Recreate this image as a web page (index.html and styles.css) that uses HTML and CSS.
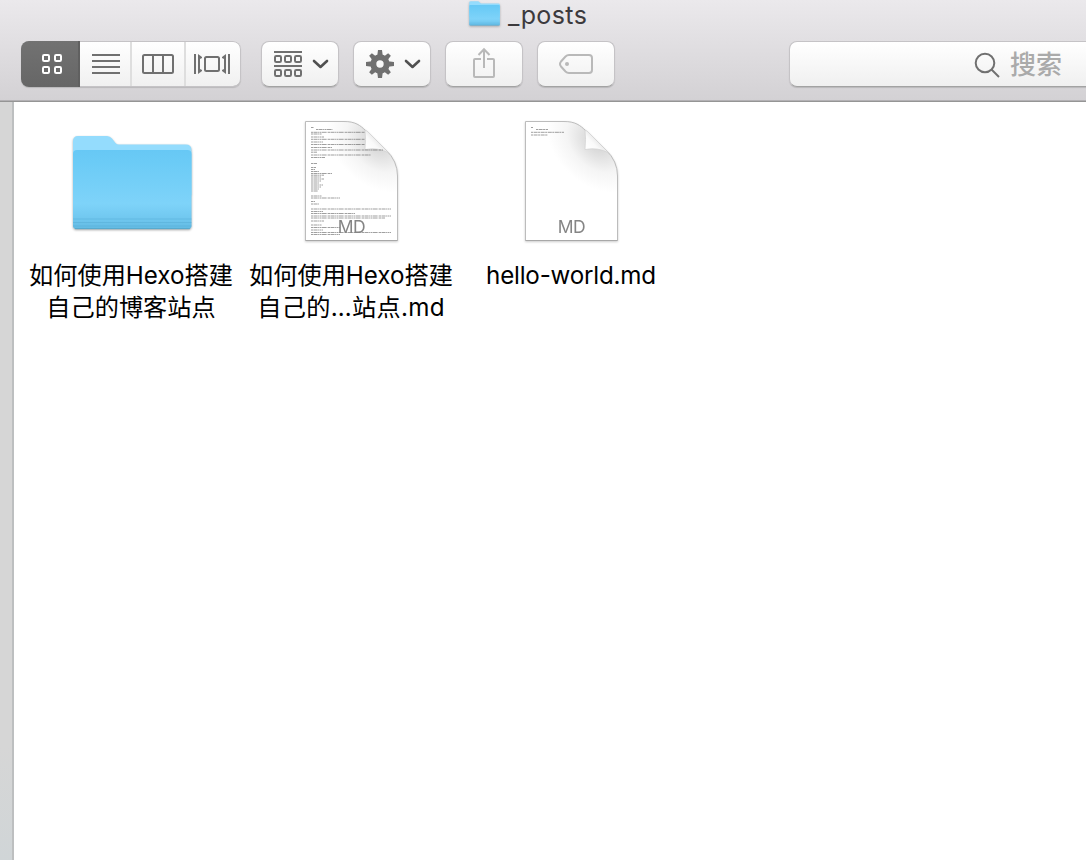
FILE: index.html
```html
<!DOCTYPE html>
<html lang="zh-CN">
<head>
<meta charset="utf-8">
<title>_posts</title>
<link rel="stylesheet" href="styles.css">
</head>
<body>
<svg width="0" height="0" class="defs" aria-hidden="true">
  <defs>
    <linearGradient id="folderFront" x1="0" y1="0" x2="0" y2="1">
      <stop offset="0" stop-color="#67c8f5"/><stop offset=".15" stop-color="#6bcbf6"/><stop offset=".68" stop-color="#7ed3f9"/><stop offset=".87" stop-color="#70c7ef"/><stop offset="1" stop-color="#62bae2"/>
    </linearGradient>
    <linearGradient id="curl" x1="70" y1="39" x2="83" y2="27" gradientUnits="userSpaceOnUse">
      <stop offset="0" stop-color="#fff"/><stop offset=".55" stop-color="#fafafa"/><stop offset="1" stop-color="#e2e2e2"/>
    </linearGradient>
    <radialGradient id="shade" cx="0" cy="0" r="1" gradientUnits="userSpaceOnUse" gradientTransform="translate(82 32) rotate(45) scale(58 42)">
      <stop offset="0" stop-color="#d0d0d0"/><stop offset=".3" stop-color="#e2e2e2"/><stop offset=".6" stop-color="#f5f5f5"/><stop offset="1" stop-color="#fff"/>
    </radialGradient>
    <symbol id="folder" viewBox="0 0 120 96">
      <path d="M1 6.500Q1 1 6 1H35Q38 1 40 3.500L43.500 8Q45 9.500 47 9.500H114Q119.500 9.500 119.500 15V60H1Z" fill="#94dcfd"/>
      <path d="M1 19Q1 15 5 15H115.500Q119.500 15 119.500 19V90.500Q119.500 94 116 94H4.500Q1 94 1 90.500Z" fill="url(#folderFront)"/>
      <path d="M1 84H119.500M1 87.500H119.500M1 91H119.500" stroke="#56add6" stroke-width="1" opacity=".5"/>
      <path d="M3 93.700H118" stroke="#529fc2" stroke-width=".8"/>
    </symbol>
    <symbol id="page" viewBox="0 0 116 140">
      <path d="M10.500 11.500H49C60 11.500 65 15 71 21L91 40Q102.500 51 102.500 66V130.500H10.500Z" fill="url(#shade)" stroke="#bcbcbc"/>
      <path d="M70 20Q71 29 70 39.500Q83 37 94 43L72 21Z" fill="url(#curl)" stroke="#d0d0d0" stroke-width=".7"/>
      <path d="M10.500 130.500H102.500" stroke="#a8a8a8"/>
    </symbol>
  </defs>
</svg>
<header class="toolbar">
  <div class="title">
    <svg class="title-folder" viewBox="0 0 120 96" preserveAspectRatio="none"><use href="#folder"/></svg>
    <span>_posts</span>
  </div>
  <div class="controls">
    <div class="segments">
      <div class="seg seg-icons active">
        <svg width="22" height="22" viewBox="0 0 22 22" fill="none" stroke="#fff" stroke-width="2"><rect x="2" y="2" width="6" height="6" rx="1.200"/><rect x="14" y="2" width="6" height="6" rx="1.200"/><rect x="2" y="14" width="6" height="6" rx="1.200"/><rect x="14" y="14" width="6" height="6" rx="1.200"/></svg>
      </div>
      <div class="seg seg-list">
        <svg width="28" height="20" viewBox="0 0 28 20" stroke="#707070" stroke-width="2"><path d="M0 1H28M0 7H28M0 13H28M0 19H28"/></svg>
      </div>
      <div class="seg seg-columns">
        <svg width="32" height="20" viewBox="0 0 32 20" fill="none" stroke="#707070" stroke-width="2"><rect x="1" y="1" width="30" height="18" rx="1.500"/><path d="M11 1V19M21 1V19"/></svg>
      </div>
      <div class="seg seg-cover">
        <svg width="36" height="20" viewBox="0 0 36 20" fill="none" stroke="#707070" stroke-width="2"><path d="M1 0V20M35 0V20"/><path d="M4 0L8 3V4L6 5V15L8 16V17L4 20ZM32 0L28 3V4L30 5V15L28 16V17L32 20Z" fill="#707070" stroke="none"/><rect x="11" y="3" width="14" height="14" rx="1.500"/></svg>
      </div>
    </div>
    <div class="button dropdown">
      <svg width="28" height="26" viewBox="0 0 28 26" fill="none" stroke="#707070" stroke-width="2"><path d="M0 1H28M0 15H28"/><rect x="1" y="5" width="6" height="6" rx="1.300"/><rect x="11" y="5" width="6" height="6" rx="1.300"/><rect x="21" y="5" width="6" height="6" rx="1.300"/><rect x="1" y="19" width="6" height="6" rx="1.300"/><rect x="11" y="19" width="6" height="6" rx="1.300"/><rect x="21" y="19" width="6" height="6" rx="1.300"/></svg>
      <svg class="chevron" width="16" height="10" viewBox="0 0 16 10"><path d="M2 2L8.500 8L15 2"/></svg>
    </div>
    <div class="button dropdown">
      <svg width="28" height="28" viewBox="-14 -14 28 28" fill="#707070"><circle r="6.700" fill="none" stroke="#707070" stroke-width="6"/><g id="teeth"><path d="M-2.800 -8L-2 -14H2L2.800 -8ZM-2.800 8L-2 14H2L2.800 8ZM-8 -2.800L-14 -2V2L-8 2.800ZM8 -2.800L14 -2V2L8 2.800Z"/></g><use href="#teeth" transform="rotate(45) scale(.96)"/></svg>
      <svg class="chevron" width="16" height="10" viewBox="0 0 16 10"><path d="M2 2L8.500 8L15 2"/></svg>
    </div>
    <div class="button">
      <svg class="share" width="24" height="32" viewBox="0 0 24 32" fill="none" stroke="#b9b9b9" stroke-width="2"><path d="M9 12H3Q2 12 2 13V29Q2 30 3 30H21Q22 30 22 29V13Q22 12 21 12H15M12 21V2M6.500 8L12 2.200L17.500 8"/></svg>
    </div>
    <div class="button">
      <svg class="tag" width="36" height="22" viewBox="0 0 36 22" fill="none" stroke="#b9b9b9" stroke-width="2"><path d="M11 2H31Q34 2 34 5V17Q34 20 31 20H11Q9 20 7.500 18.500L3 13.500Q1 11 3 8.500L7.500 3.500Q9 2 11 2Z"/><circle cx="9" cy="11" r="2" fill="#b9b9b9" stroke="none"/></svg>
    </div>
    <div class="search">
      <svg width="26" height="26" viewBox="0 0 26 26" fill="none" stroke="#707070" stroke-width="2"><circle cx="11" cy="11" r="9.300"/><path d="M17.500 17.500L25 25"/></svg>
      <span>搜索</span>
    </div>
  </div>
</header>
<div class="window">
  <aside class="sidebar"></aside>
  <main class="files">
    <div class="file">
      <div class="icon"><svg class="folder" width="120" height="96"><use href="#folder"/></svg></div>
      <div class="name">如何使用Hexo搭建<br>自己的博客站点</div>
    </div>
    <div class="file">
      <div class="icon"><svg class="document" width="116" height="140" viewBox="0 0 116 140"><use href="#page"/>
        <path fill="none" stroke="#555" stroke-width=".8" opacity=".7" stroke-dasharray="2 .5 4 .4 1 .6" d="M16 17.500H19M21 19.500H38M16 22.300H70M16 24H27M16 27H29M16 29.300H70M16 32H28M16 34.500H70M16 37.500H37M16 40H88M16 42.200H22M16 45H76M16 47.500H30M16 53.500H22M16 57.500H21M16 59.500H20M16 61.500H24M16 63.500H37M16 65.200H29M16 67H26M16 69H29M16 71H26M16 73H24M16 75H28M16 77H26M16 79H24M16 81H23M16 86H27M16 88H45M16 91.500H20M16 94H24M16 99H96M16 101.500H28M16 103.500H60M16 106H96M16 108H90M16 111H29M16 115H27M16 117.500H45M16 120H28M16 122.500H96M16 124.500H45"/>
        <text x="56.500" y="123" class="type">MD</text></svg></div>
      <div class="name">如何使用Hexo搭建<br><span class="wide">自己的…站点.md</span></div>
    </div>
    <div class="file">
      <div class="icon"><svg class="document" width="116" height="140" viewBox="0 0 116 140"><use href="#page"/>
        <path d="M16 17.500H18M21 19.500H33M16 22.300H49M16 25H33" fill="none" stroke="#555" stroke-width=".8" stroke-dasharray="2 .6 4 .5" opacity=".7"/>
        <text x="56.500" y="123" class="type">MD</text></svg></div>
      <div class="name latin">hello-world.md</div>
    </div>
  </main>
</div>
</body>
</html>
```
FILE: styles.css
```css
* { box-sizing: border-box; }
body {
  margin: 0;
  height: 860px;
  overflow: hidden;
  display: flex;
  flex-direction: column;
  background: #fff;
  font-family: Inter, "Noto Sans CJK SC", sans-serif;
}
svg { display: block; flex: none; }
.defs { position: absolute; }
.toolbar {
  height: 102px;
  flex: none;
  overflow: hidden;
  background: linear-gradient(#ebe9ec, #d3d1d4);
  border-bottom: 1px solid #959595;
  box-shadow: inset 0 -1px #b3b1b4;
}
.title {
  height: 41px;
  padding: 0 0 11px 469px;
  display: flex;
  align-items: center;
  gap: 8px;
  color: #3c3a3d;
  font-size: 25px;
  line-height: 30px;
  letter-spacing: .4px;
}
.title-folder { width: 31px; height: 25px; margin-top: -3px; filter: drop-shadow(0 1px 1px #0004); }
.controls { display: flex; padding-left: 21px; }
.segments, .button, .search {
  height: 46px;
  border: 1px solid #c5c3c6;
  border-bottom-color: #a3a3a3;
  border-radius: 8px;
  background: linear-gradient(#fff, #f0f0f0);
  box-shadow: 0 1px 1px #0002;
}
.segments {
  display: flex;
  width: 220px;
  margin-right: 20px;
  overflow: hidden;
  border: 0;
  box-shadow: inset 0 0 0 1px #c5c3c6, inset 0 -1px #a3a3a3, 0 1px 1px #0002;
}
.seg { display: flex; align-items: center; justify-content: center; border-right: 2px solid #dedede; }
.seg-icons { width: 59px; padding-left: 4px; background: linear-gradient(#727272, #666); border-color: #606060; }
.seg-list { width: 52px; padding-left: 1px; margin: 1px 0; }
.seg-columns { width: 54px; margin: 1px 0; }
.seg-cover { flex: 1; border: 0; padding-right: 3px; }
.button { display: flex; align-items: center; justify-content: center; width: 78px; margin-right: 14px; }
.dropdown { justify-content: flex-start; gap: 10px; padding-left: 11px; }
.dropdown svg:first-child { margin-left: 1px; }
.chevron { overflow: visible; fill: none; stroke: #505050; stroke-width: 2.6; stroke-linecap: round; stroke-linejoin: round; }
.share { margin-top: -3px; }
.search {
  flex: 1;
  margin-left: 160px;
  margin-right: -10px;
  padding-left: 184px;
  display: flex;
  align-items: center;
  gap: 10px;
  color: #aaa;
  font-size: 26px;
  line-height: 40px;
  font-weight: 500;
}
.search svg { margin-top: 2px; }
.search span { padding-top: 2px; }
.window { flex: 1; display: flex; }
.sidebar { width: 14px; background: linear-gradient(#d6d6d6 85%, #d0d5d7); border-right: 2px solid #bdbfc0; }
.files { flex: 1; display: flex; align-items: flex-start; padding: 8px 0 0 7px; }
.file { width: 220px; }
.icon { height: 140px; display: flex; justify-content: center; margin-bottom: 10px; }
.folder { margin: 25px 0 0 2px; filter: drop-shadow(0 1px 1px #0005); }
.document { margin-left: 3px; filter: drop-shadow(0 1px 1px #0003); }
.type { font: 17.500px Inter, sans-serif; fill: #858585; text-anchor: middle; letter-spacing: -.5px; }
.name { color: #000; text-align: center; font-size: 24.200px; line-height: 32px; white-space: nowrap; }
.wide { letter-spacing: .3px; }
.latin { letter-spacing: -.2px; }
```
